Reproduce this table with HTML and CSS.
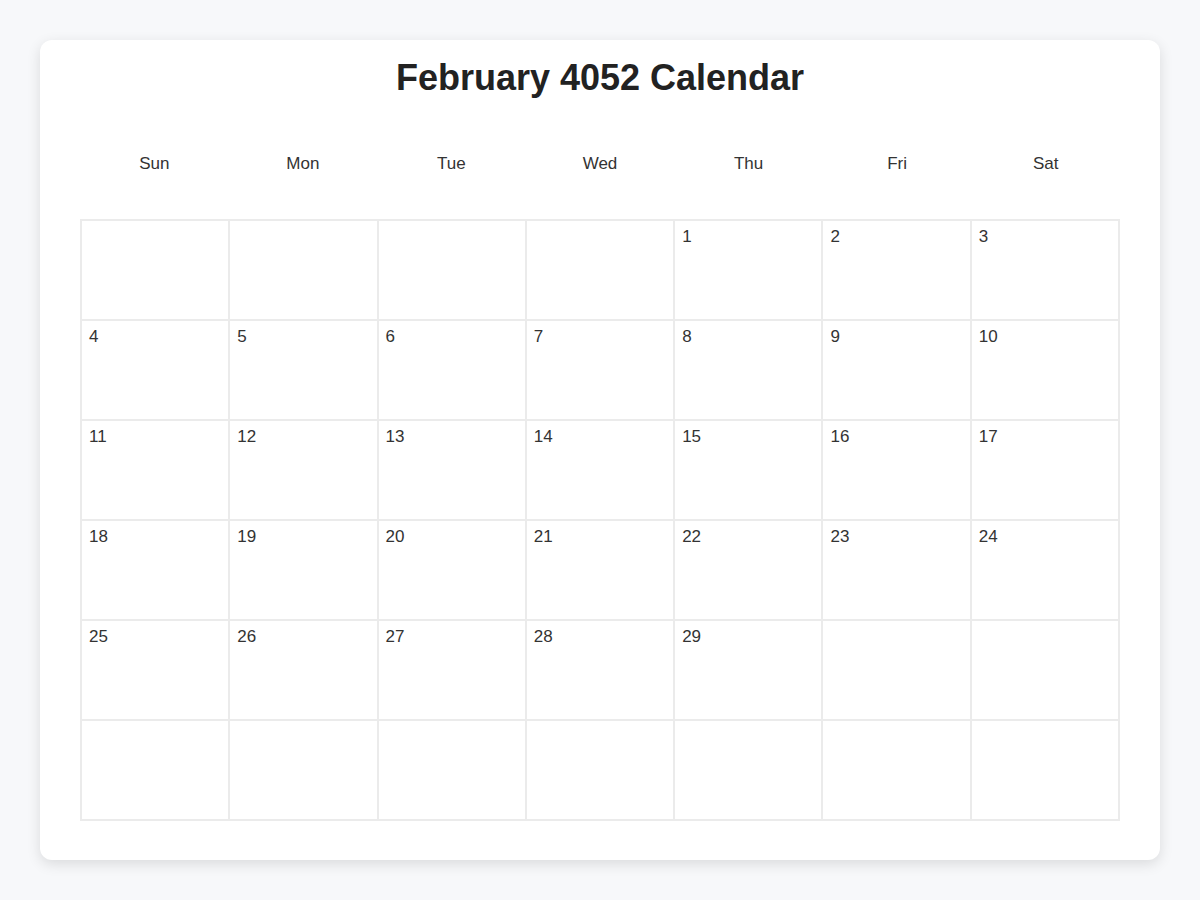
FILE: index.html
```html
<!DOCTYPE html>
<html lang="en">
<head>
<meta charset="utf-8">
<title>February 4052 Calendar</title>
<link rel="stylesheet" href="styles.css">
</head>
<body>
<div class="card">
  <h1 class="title">February 4052 Calendar</h1>
  <div class="weekdays">
    <div class="weekday">Sun</div>
    <div class="weekday">Mon</div>
    <div class="weekday">Tue</div>
    <div class="weekday">Wed</div>
    <div class="weekday">Thu</div>
    <div class="weekday">Fri</div>
    <div class="weekday">Sat</div>
  </div>
  <div class="grid">
    <div class="day"></div><div class="day"></div><div class="day"></div><div class="day"></div>
    <div class="day">1</div><div class="day">2</div><div class="day">3</div>
    <div class="day">4</div><div class="day">5</div><div class="day">6</div><div class="day">7</div>
    <div class="day">8</div><div class="day">9</div><div class="day">10</div>
    <div class="day">11</div><div class="day">12</div><div class="day">13</div><div class="day">14</div>
    <div class="day">15</div><div class="day">16</div><div class="day">17</div>
    <div class="day">18</div><div class="day">19</div><div class="day">20</div><div class="day">21</div>
    <div class="day">22</div><div class="day">23</div><div class="day">24</div>
    <div class="day">25</div><div class="day">26</div><div class="day">27</div><div class="day">28</div>
    <div class="day">29</div><div class="day"></div><div class="day"></div>
    <div class="day"></div><div class="day"></div><div class="day"></div><div class="day"></div>
    <div class="day"></div><div class="day"></div><div class="day"></div>
  </div>
</div>
</body>
</html>
```
FILE: styles.css
```css
html, body {
  margin: 0;
  padding: 0;
}
body {
  background: #f7f8fa;
  font-family: "Liberation Sans", Arial, sans-serif;
  color: #333;
  padding: 40px;
}
.card {
  background: #fff;
  border-radius: 12px;
  box-shadow: 0 4px 14px rgba(0, 0, 0, 0.12);
  padding: 17px 40px 40px;
  box-sizing: border-box;
  width: 1120px;
  height: 820px;
}
.title {
  margin: 0;
  font-size: 36px;
  line-height: 42px;
  font-weight: 700;
  text-align: center;
  color: #222;
}
.weekdays {
  display: grid;
  grid-template-columns: repeat(7, 1fr);
  margin-top: 45px;
  height: 40px;
}
.weekday {
  text-align: center;
  font-size: 17px;
  line-height: 40px;
  color: #333;
}
.grid {
  margin-top: 35px;
  display: grid;
  grid-template-columns: repeat(7, 1fr);
  grid-auto-rows: 100px;
  border: 1px solid #ebebeb;
}
.day {
  border: 1px solid #ebebeb;
  box-sizing: border-box;
  padding: 6px 7px 5px;
  font-size: 17px;
  line-height: 20px;
  color: #333;
}
```
